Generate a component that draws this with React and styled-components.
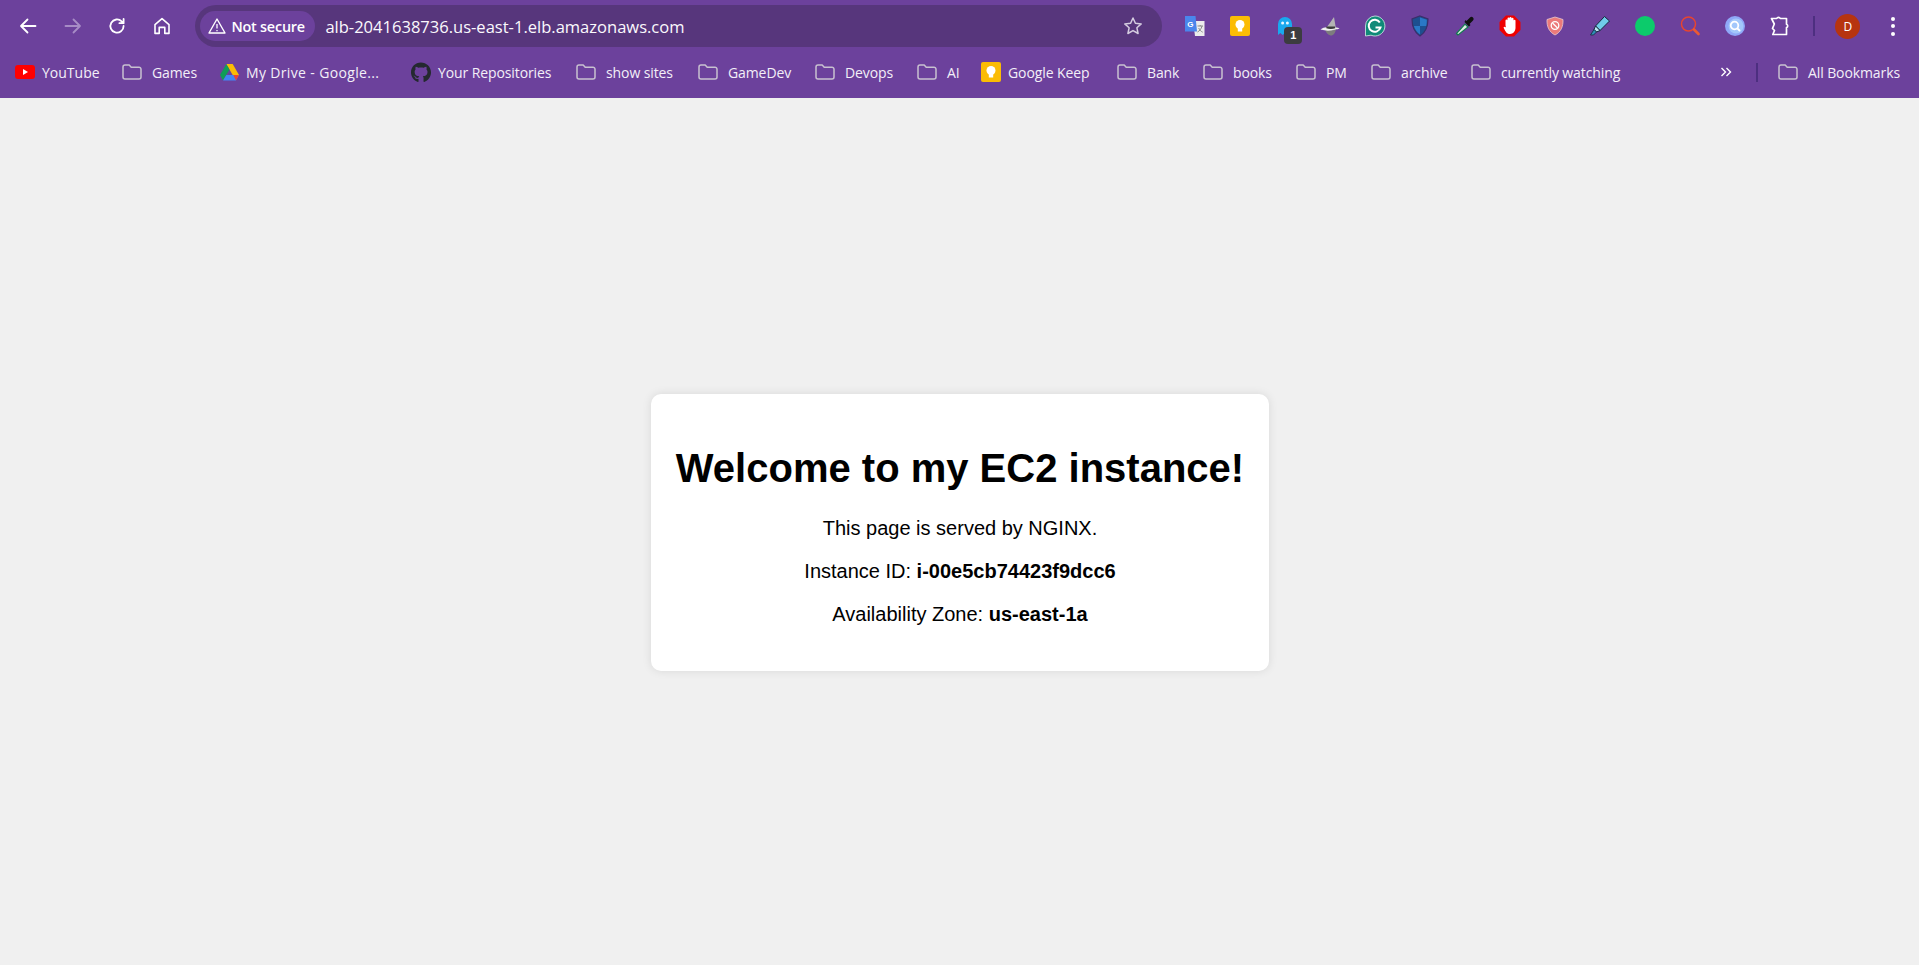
import React from "react";
import styled, { createGlobalStyle } from "styled-components";
import { FaGithub } from "react-icons/fa";

const Global = createGlobalStyle`
  html, body { margin: 0; padding: 0; height: 100%; }
  body { background: #f0f0f0; overflow: hidden; }
  #root { height: 100%; }
`;

const Page = styled.div`
  height: 965px;
  display: flex;
  flex-direction: column;
`;
const Chrome = styled.header`
  background: #6c419c;
  height: 98px;
  flex: none;
  color: #fff;
  font-family: "Open Sans", "Noto Sans", sans-serif;
`;
const TopRow = styled.div`
  height: 52px;
  display: flex;
  align-items: center;
  padding-left: 6px;
`;
const NavGroup = styled.nav`
  display: grid;
  grid-template-columns: repeat(4, 44.6px);
  margin-right: 11px;
`;
const NavButton = styled.span`
  height: 32px;
  display: flex;
  align-items: center;
  justify-content: center;
  color: ${(p) => (p.$disabled ? "#a78cc6" : "#fff")};
`;
const Omnibox = styled.div`
  width: 967px;
  height: 42px;
  box-sizing: border-box;
  border-radius: 21px;
  background: #57367c;
  display: flex;
  align-items: center;
  padding: 0 19px 0 5px;
`;
const SecurityChip = styled.span`
  width: 115px;
  height: 30px;
  box-sizing: border-box;
  border-radius: 15px;
  background: #6c419c;
  display: flex;
  align-items: center;
  gap: 5px;
  padding-left: 8px;
  font-size: 14.4px;
  font-weight: 600;
  letter-spacing: -0.2px;
  white-space: nowrap;
`;
const Url = styled.span`
  margin-left: 10px;
  flex: 1;
  font-size: 16.55px;
  white-space: nowrap;
  color: #fbf9fd;
`;
const Extensions = styled.div`
  display: grid;
  grid-template-columns: repeat(14, 45px);
  margin-left: 10.5px;
`;
const Extension = styled.span`
  height: 32px;
  display: flex;
  align-items: center;
  justify-content: center;
  position: relative;
`;
const Badge = styled.span`
  position: absolute;
  left: 21.5px;
  top: 17px;
  width: 18px;
  height: 17px;
  border-radius: 4px;
  background: #3c3c40;
  color: #fff;
  font: 700 11px/17px "Liberation Sans", sans-serif;
  text-align: center;
`;
const ToolbarDivider = styled.span`
  width: 2px;
  height: 20px;
  margin-left: 10px;
  background: #4d2f80;
`;
const Avatar = styled.span`
  width: 25px;
  height: 25px;
  margin-left: 20.5px;
  border-radius: 50%;
  background: #b7340f;
  color: #fff;
  font: 400 12px/25px "Open Sans", sans-serif;
  text-align: center;
`;
const MenuDots = styled.span`
  margin-left: 31px;
  display: flex;
  flex-direction: column;
  gap: 3.5px;
  & > i {
    width: 4px;
    height: 4px;
    border-radius: 50%;
    background: #fff;
  }
`;
const BookmarkBar = styled.div`
  height: 46px;
  box-sizing: border-box;
  padding: 0 15px 6px 15px;
  display: flex;
  align-items: center;
  gap: 23px;
  font-size: 14px;
  color: #f3eff8;
`;
const Bookmark = styled.span`
  display: flex;
  align-items: center;
  gap: ${(p) => (p.$folder ? "10px" : "7px")};
  flex: none;
`;
const BookmarkLabel = styled.span`
  width: ${(p) => p.$w}px;
  white-space: nowrap;
  letter-spacing: ${(p) => p.$track ?? -0.1}px;
`;
const BookmarkIcon = styled.span`
  width: 20px;
  height: 20px;
  display: flex;
  align-items: center;
  justify-content: center;
  color: #24292f;
`;
const BarEnd = styled.div`
  margin-left: auto;
  display: flex;
  align-items: center;
  gap: 21px;
`;
const Overflow = styled.span`
  width: 12px;
  margin-right: 3px;
  display: flex;
`;
const BarDivider = styled.span`
  width: 2px;
  height: 19px;
  margin-right: -1px;
  background: #4d2f80;
`;

const Content = styled.main`
  flex: 1;
  display: flex;
  align-items: center;
  justify-content: center;
  padding: 2px 0 0 1px;
  font-family: "Liberation Sans", Arial, sans-serif;
  color: #000;
`;
const Card = styled.section`
  box-sizing: border-box;
  width: 618px;
  background: #fff;
  padding: 24px 0 25px;
  border-radius: 10px;
  box-shadow: 0 0 10px rgba(0, 0, 0, 0.1);
  text-align: center;
`;
const Title = styled.h1`
  font-size: 40px;
  margin: 27px 0 26px;
  line-height: 46px;
  white-space: nowrap;
`;
const Line = styled.p`
  font-size: 20px;
  line-height: 23px;
  margin: 20px 0;
`;

const Svg = ({ s = 20, w, h, v = "0 0 20 20", children }) => (
  <svg width={w || s} height={h || s} viewBox={v} fill="none" style={{ display: "block" }}>
    {children}
  </svg>
);

const Folder = () => (
  <Svg w={20} h={16} v="0 0 20 16">
    <path
      d="M1 3a2 2 0 0 1 2-2h4.2l2 2.2H17a2 2 0 0 1 2 2V13a2 2 0 0 1-2 2H3a2 2 0 0 1-2-2z"
      stroke="#c8c1d0"
      strokeWidth="1.5"
      strokeLinejoin="round"
    />
  </Svg>
);

const stroke = { stroke: "currentColor", strokeWidth: 1.8, strokeLinecap: "round", strokeLinejoin: "round" };

const Back = () => (
  <Svg s={18} v="0 0 18 18">
    <path d="M16.5 9H2M8.5 2.5 2 9l6.5 6.5" {...stroke} />
  </Svg>
);
const Forward = () => (
  <Svg s={18} v="0 0 18 18">
    <path d="M1.5 9H16M9.5 2.5 16 9l-6.5 6.5" {...stroke} />
  </Svg>
);
const Reload = () => (
  <Svg s={18} v="0 0 18 18">
    <path d="M15.6 9a6.6 6.6 0 1 1-1.9-4.6L15.6 6.2M15.6 2v4.2h-4.2" {...stroke} />
  </Svg>
);
const Home = () => (
  <Svg s={18} v="0 0 18 18">
    <path d="M2 7.6 9 1.6l7 6v8.8h-4.2v-6H6.2v6H2z" {...stroke} strokeWidth="1.6" />
  </Svg>
);
const Warning = () => (
  <Svg w={18} h={16} v="0 0 18 16">
    <path d="M9 1 17 15H1z" stroke="#fff" strokeWidth="1.4" strokeLinejoin="round" />
    <path d="M9 6v4.5M9 12v1.2" stroke="#fff" strokeWidth="1.3" />
  </Svg>
);
const Star = () => (
  <Svg s={20}>
    <path
      d="m10 2 2.4 5.3 5.8.6-4.3 3.9 1.2 5.7L10 14.6l-5.1 2.9 1.2-5.7-4.3-3.9 5.8-.6z"
      stroke="#d5cde0"
      strokeWidth="1.5"
      strokeLinejoin="round"
    />
  </Svg>
);
const Translate = () => (
  <Svg s={22} v="0 0 22 22">
    <path d="M9 6h11.500v15H11z" fill="#ececec" />
    <path d="M1 1h10.500l1.500 15.500H1z" fill="#4a86ec" />
    <text x="3.200" y="11.500" fontSize="8" fontWeight="700" fill="#fff" fontFamily="Liberation Sans">G</text>
    <path d="M13.500 11h5.500M16.200 10v1M18 11c-.6 3-2.600 5-4.500 6M14.700 13c.8 1.800 2 3.200 4 4.200" stroke="#8a8a8a" strokeWidth="1" />
  </Svg>
);
const Keep = ({ s = 20 }) => (
  <Svg s={s}>
    <rect width="20" height="20" rx="2" fill="#fbbc04" />
    <circle cx="10" cy="8.500" r="4.500" fill="#fff" />
    <rect x="7.800" y="12" width="4.400" height="3.500" fill="#fff" />
  </Svg>
);
const Ghost = () => (
  <Svg w={14} h={18} v="0 0 14 18">
    <path d="M0 7a7 7 0 0 1 14 0v11l-2.300-2-2.300 2-2.400-2-2.300 2-2.400-2L0 18z" fill="#19a9ee" />
    <circle cx="4.600" cy="6" r="1.500" fill="#e6f6ff" />
    <circle cx="9.400" cy="6" r="1.500" fill="#e6f6ff" />
  </Svg>
);
const Hat = () => (
  <Svg s={20}>
    <path d="M14 1c.5 4 1.500 8 2 12-3 3-9 3-11 0 3-3 6-8 9-12z" fill="#b4b4b4" />
    <path d="M5 13c1 4 3 6 5.500 6.500S15.500 17 16 13c-3 2-8 2-11 0z" fill="#7d7d7d" />
    <path d="M.5 13.500c2-1.500 4-2 6-2.200-.5 1.500 7 2 8.500.3 2 0 4 .4 4.500 1-1 .5-3 1-5 .9-4 1.500-9 1.500-14 0z" fill="#f0f0f0" />
    <path d="M6.500 10.500h8.500l.3 1.700c-3 1-6 1-9 0z" fill="#3a3a3a" />
  </Svg>
);
const Grammarly = () => (
  <Svg s={22} v="0 0 22 22">
    <path d="M11 1a10 10 0 1 1-4 19.200L1.500 21V11A10 10 0 0 1 11 1z" fill="#0f8a78" stroke="#d8ece8" strokeWidth=".8" />
    <path d="M15.800 7.500a6 6 0 1 0 .7 5H11.500" stroke="#fff" strokeWidth="2" />
  </Svg>
);
const BlueShield = () => (
  <Svg s={22} v="0 0 22 22">
    <path d="M11 1l8 3c0 8-2 13-8 17C5 17 3 12 3 4z" fill="#1d4f8f" stroke="#3a2f6a" strokeWidth="1.200" />
    <path d="M11 2.500l6.800 2.300c0 2-.1 4.200-.6 6.200H11zM11 11v8.500c-3-2-4.900-5-6.200-8.500z" fill="#2a78c6" />
  </Svg>
);
const Dropper = () => (
  <Svg s={22} v="0 0 22 22">
    <path d="M4 20l-1.500-1.500L11 9l3 3z" fill="#dfeee3" stroke="#127a4f" strokeWidth="1.200" />
    <path d="M10.500 7 15 11.500l1.500-1.500-1-1 3.500-3.500a2 2 0 0 0-3-3L12.500 6l-1-1z" fill="#111" />
  </Svg>
);
const AdBlock = () => (
  <Svg s={22} v="0 0 22 22">
    <path d="M7 .5h8L21.500 7v8L15 21.500H7L.5 15V7z" fill="#ee0000" />
    <path d="M6.500 10.500V5.500a1 1 0 0 1 2 0V3.500a1 1 0 0 1 2 0V3a1 1 0 0 1 2 0v.8a1 1 0 0 1 2 0v2a1 1 0 0 1 2 0V13c0 3-2.500 6-5.500 6-3 0-4-1.500-6.500-6.500 .7-1 1.500-1 2.500 0z" fill="#fff" />
  </Svg>
);
const PinkShield = () => (
  <Svg s={20}>
    <path d="M10 1l8 2.500c.3 7-2 12.500-8 15.500C4 16 1.700 10.500 2 3.500z" fill="#ec7a7a" stroke="#e9c9cf" strokeWidth=".8" />
    <circle cx="10" cy="9.500" r="3.800" stroke="#fff" strokeWidth="1.300" />
    <path d="M7.500 7 12.500 12" stroke="#fff" strokeWidth="1.300" />
  </Svg>
);
const Highlighter = () => (
  <Svg s={22} v="0 0 22 22">
    <path d="M15.500 1.500 20.500 6 11 15.500 6.500 11z" fill="#6fcbe9" stroke="#14283c" strokeWidth="1" />
    <path d="M6.500 11 11 15.500 7.500 17 5 14.500z" fill="#b9e6f2" stroke="#14283c" strokeWidth="1" />
    <path d="M5 14.500 7.500 17 4.500 20H1.500z" fill="#2f8fb5" stroke="#14283c" strokeWidth=".8" />
  </Svg>
);
const GreenDot = () => (
  <Svg s={20}>
    <circle cx="10" cy="10" r="10" fill="#0ccb6b" />
  </Svg>
);
const RedSearch = () => (
  <Svg s={22} v="0 0 22 22">
    <circle cx="9.500" cy="9" r="7" stroke="#e8452f" strokeWidth="1.500" />
    <path d="M15 14.500 19.500 19" stroke="#ea5a33" strokeWidth="2.600" strokeLinecap="round" />
  </Svg>
);
const BlueSearch = () => (
  <Svg s={20}>
    <circle cx="10" cy="10" r="10" fill="#8fa8f8" />
    <circle cx="11" cy="10" r="7.500" fill="#a3c8fb" />
    <circle cx="9.500" cy="9.500" r="3.800" stroke="#fff" strokeWidth="1.800" />
    <path d="M12 12l3 3" stroke="#fff" strokeWidth="1.800" />
  </Svg>
);
const Puzzle = () => (
  <Svg s={22} v="0 0 22 22">
    <path
      d="M2.500 3.500h5.200a2 2 0 0 1 3.600 0h6.200v5.700a1.800 1.800 0 0 1 0 3.400V19.500H3.800l1.700-4-2-2 1.800-4.500z"
      stroke="#fff"
      strokeWidth="1.700"
      strokeLinejoin="round"
    />
  </Svg>
);
const YouTube = () => (
  <Svg w={20} h={14} v="0 0 20 14">
    <rect width="20" height="14" rx="3" fill="#f00" />
    <path d="M8 4l5 3-5 3z" fill="#fff" />
  </Svg>
);
const Drive = () => (
  <Svg w={19} h={17} v="0 0 19 17">
    <path d="M6.300 0h6.400l6.300 11h-6.300z" fill="#fbbc04" />
    <path d="M6.300 0 0 11l3 5.500L9.500 5.500z" fill="#0f9d58" />
    <path d="M6.300 11H19l-3 5.500H3z" fill="#4285f4" />
    <path d="M16 16.500 13.300 11H19z" fill="#ea4335" />
  </Svg>
);
const Chevrons = () => (
  <Svg w={12} h={12} v="0 0 12 12">
    <path d="M1.500 2 5.500 6l-4 4M6.500 2l4 4-4 4" stroke="#fff" strokeWidth="1.400" />
  </Svg>
);

const exts = [Translate, Keep, Ghost, Hat, Grammarly, BlueShield, Dropper, AdBlock, PinkShield, Highlighter, GreenDot, RedSearch, BlueSearch, Puzzle];

const marks = [
  { l: "YouTube", w: 57, i: <YouTube />, track: 0 },
  { l: "Games", w: 44, folder: true },
  { l: "My Drive - Google...", w: 142, i: <Drive />, track: 0.35 },
  { l: "Your Repositories", w: 115, i: <FaGithub size={21} /> },
  { l: "show sites", w: 69, folder: true },
  { l: "GameDev", w: 64, folder: true },
  { l: "Devops", w: 49, folder: true },
  { l: "AI", w: 11, folder: true },
  { l: "Google Keep", w: 86, i: <Keep /> },
  { l: "Bank", w: 33, folder: true },
  { l: "books", w: 40, folder: true },
  { l: "PM", w: 22, folder: true },
  { l: "archive", w: 47, folder: true },
  { l: "currently watching", w: 122, folder: true },
];

export default function App() {
  return (
    <Page>
      <Global />
      <Chrome>
        <TopRow>
          <NavGroup>
            <NavButton><Back /></NavButton>
            <NavButton $disabled><Forward /></NavButton>
            <NavButton><Reload /></NavButton>
            <NavButton><Home /></NavButton>
          </NavGroup>
          <Omnibox>
            <SecurityChip><Warning />Not secure</SecurityChip>
            <Url>alb-2041638736.us-east-1.elb.amazonaws.com</Url>
            <Star />
          </Omnibox>
          <Extensions>
            {exts.map((E, i) => (
              <Extension key={i}>
                <E />
                {i === 2 && <Badge>1</Badge>}
              </Extension>
            ))}
          </Extensions>
          <ToolbarDivider />
          <Avatar>D</Avatar>
          <MenuDots><i /><i /><i /></MenuDots>
        </TopRow>
        <BookmarkBar>
          {marks.map((m) => (
            <Bookmark key={m.l} $folder={m.folder}>
              <BookmarkIcon>{m.folder ? <Folder /> : m.i}</BookmarkIcon>
              <BookmarkLabel $w={m.w} $track={m.track}>{m.l}</BookmarkLabel>
            </Bookmark>
          ))}
          <BarEnd>
            <Overflow><Chevrons /></Overflow>
            <BarDivider />
            <Bookmark $folder>
              <BookmarkIcon><Folder /></BookmarkIcon>
              <BookmarkLabel $w={96}>All Bookmarks</BookmarkLabel>
            </Bookmark>
          </BarEnd>
        </BookmarkBar>
      </Chrome>
      <Content>
        <Card>
          <Title>Welcome to my EC2 instance!</Title>
          <Line>This page is served by NGINX.</Line>
          <Line>Instance ID: <strong>i-00e5cb74423f9dcc6</strong></Line>
          <Line>Availability Zone: <strong>us-east-1a</strong></Line>
        </Card>
      </Content>
    </Page>
  );
}
